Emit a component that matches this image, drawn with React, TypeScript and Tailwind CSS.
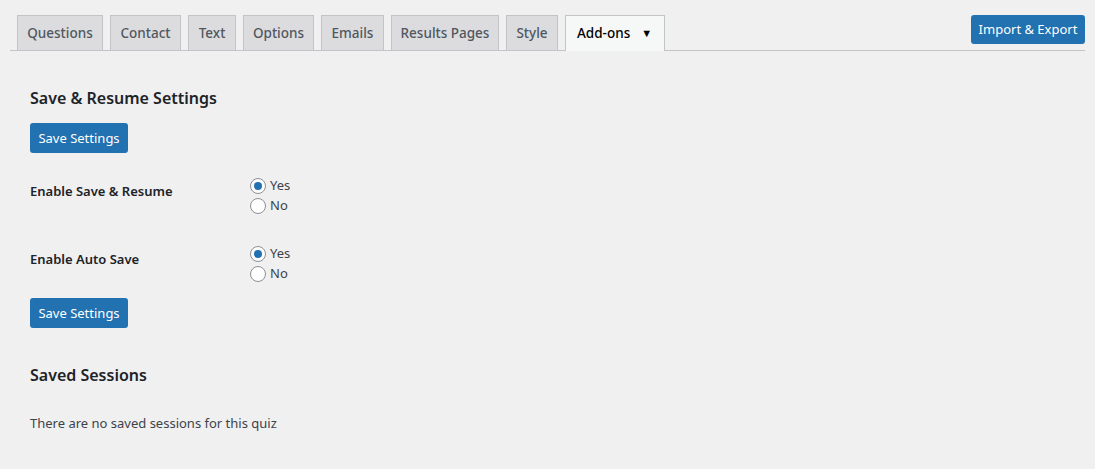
import React from 'react';

const tabs = [
  { label: 'Questions', w: 'w-[86px]' },
  { label: 'Contact', w: 'w-[71px]' },
  { label: 'Text', w: 'w-[48px]' },
  { label: 'Options', w: 'w-[71px]' },
  { label: 'Emails', w: 'w-[63px]' },
  { label: 'Results Pages', w: 'w-[108px]' },
  { label: 'Style', w: 'w-[52px]' },
];

interface RadioGroupProps {
  name: string;
  value: string;
}

const RadioGroup: React.FC<RadioGroupProps> = ({ name, value }) => {
  return (
    <div className="flex flex-col">
      {['Yes', 'No'].map((opt) => (
        <label key={opt} htmlFor={`${name}-${opt}`} className="flex items-center gap-[4px] h-5 text-[13px] text-[#3c434a]">
          <span className="w-4 h-4 rounded-full border border-[#8c8f94] bg-white flex items-center justify-center">
            {value === opt && <span className="w-2 h-2 rounded-full bg-[#2271b1]" />}
          </span>
          <span>{opt}</span>
        </label>
      ))}
    </div>
  );
};

const SaveButton = () => (
  <button className="w-[98px] h-[30px] rounded-[3px] bg-[#2271b1] text-white text-[13px] leading-none">
    Save Settings
  </button>
);

export default function App() {
  return (
    <div className="min-h-screen bg-[#f0f0f1] px-[10px] pt-[15px] font-['Segoe_UI','Noto_Sans',sans-serif] text-[#1d2327]">
      {/* Вкладки */}
      <div className="flex items-start border-b border-[#c3c4c7] pl-[7px]">
        {tabs.map((t) => (
          <div
            key={t.label}
            className={`${t.w} h-[35px] mr-[7px] flex items-center justify-center border border-b-0 border-[#c3c4c7] bg-[#dcdcde] text-[13.5px] font-medium text-[#50575e]`}
          >
            {t.label}
          </div>
        ))}
        <div className="w-[100px] h-[36px] -mb-px pl-[11px] flex items-center gap-[11px] border border-b-0 border-[#c3c4c7] bg-[#f6f7f7] text-[13.5px] font-medium text-black">
          <span>Add-ons</span>
          <span className="text-[11px]">▼</span>
        </div>
        <button className="ml-auto w-[114px] h-[29px] rounded-[3px] bg-[#2271b1] text-white text-[13px]">
          Import &amp; Export
        </button>
      </div>

      {/* Настройки */}
      <div className="pl-[20px]">
        <h2 className="mt-[35px] text-[16px] leading-6 font-semibold">Save &amp; Resume Settings</h2>
        <div className="mt-[13px]">
          <SaveButton />
        </div>

        <div className="mt-[23px] flex">
          <div className="w-[220px] mt-[5px] leading-5 text-[13px] font-semibold">Enable Save &amp; Resume</div>
          <RadioGroup name="save-resume" value="Yes" />
        </div>

        <div className="mt-[28px] flex">
          <div className="w-[220px] mt-[5px] leading-5 text-[13px] font-semibold">Enable Auto Save</div>
          <RadioGroup name="auto-save" value="Yes" />
        </div>

        <div className="mt-[14px]">
          <SaveButton />
        </div>

        <h2 className="mt-[35px] text-[16px] leading-6 font-semibold">Saved Sessions</h2>
        <p className="mt-[26px] leading-5 text-[13px] text-[#3c434a]">There are no saved sessions for this quiz</p>
      </div>
    </div>
  );
}
